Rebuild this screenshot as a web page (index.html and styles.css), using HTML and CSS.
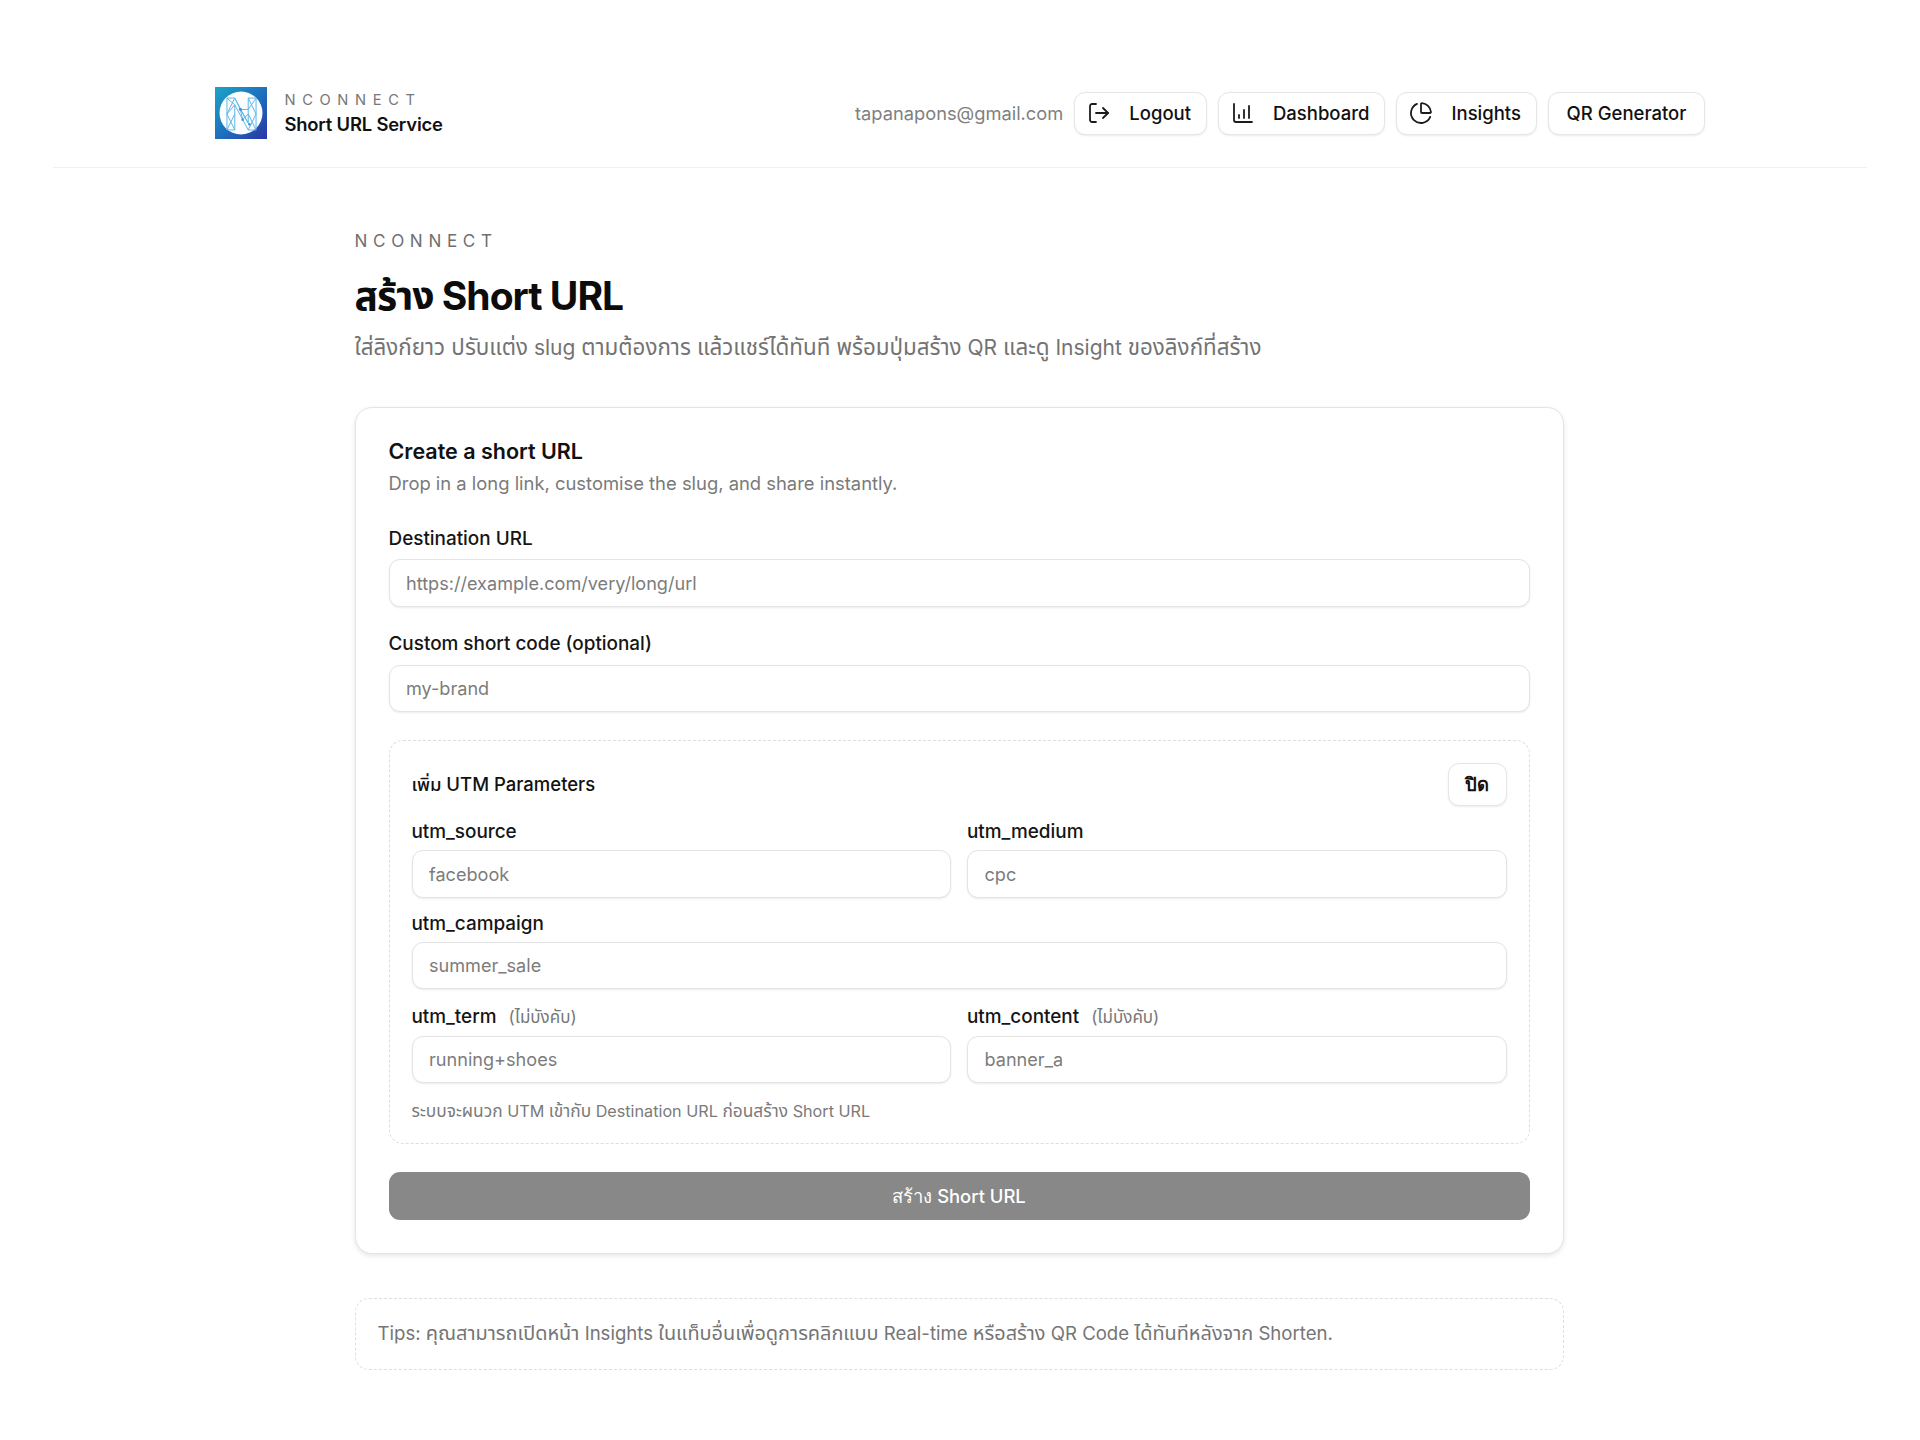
FILE: index.html
```html
<!DOCTYPE html>
<html lang="th">
<head>
<meta charset="utf-8">
<title>NCONNECT Short URL</title>
<link rel="stylesheet" href="styles.css">
</head>
<body>
<header class="topbar">
  <div class="brand">
    <svg class="logo" viewBox="0 0 52 52" aria-hidden="true">
      <defs><linearGradient id="lg" x1="0" y1="0" x2="1" y2="1"><stop offset="0" stop-color="#1ba5c6"/><stop offset=".55" stop-color="#1e6cbc"/><stop offset="1" stop-color="#2a34a6"/></linearGradient></defs>
      <rect width="52" height="52" fill="url(#lg)"/>
      <circle cx="26" cy="26" r="21.5" fill="#fbfdfe"/>
      <g transform="translate(26.500 27) scale(1.12 1.14) translate(-26 -27)">
        <g fill="none" stroke="#5bb5e6" stroke-width=".85">
          <path d="M13 13h7l12 22V13h7v28h-7L20 19v22h-7zM13 13l7 6M20 13l-7 14 7 14M13 27l7-8M13 41l7-14M20 13l5 10 7 12M32 13l7 14-7 14M39 13l-7 10-7 0M39 41l-7-14-5 5M25 23l2 9"/>
        </g>
        <g fill="#3d8fd0"><circle cx="25" cy="23" r="1.3"/><circle cx="27" cy="32" r="1.1"/><circle cx="33" cy="36" r="1.1"/></g>
      </g>
    </svg>
    <div class="brand-text">
      <div class="brand-kicker">NCONNECT</div>
      <div class="brand-name">Short URL Service</div>
    </div>
  </div>
  <nav class="nav">
    <span class="email">tapanapons@gmail.com</span>
    <a class="btn"><svg class="ico" viewBox="0 0 24 24"><path d="M9 21H5a2 2 0 0 1-2-2V5a2 2 0 0 1 2-2h4"/><path d="M16 17l5-5-5-5"/><path d="M21 12H9"/></svg><span>Logout</span></a>
    <a class="btn"><svg class="ico" viewBox="0 0 24 24"><path d="M3 3v16a2 2 0 0 0 2 2h16"/><path d="M8 17v-3"/><path d="M13 17V9"/><path d="M18 17V5"/></svg><span>Dashboard</span></a>
    <a class="btn"><svg class="ico" viewBox="0 0 24 24"><path d="M21 12c.552 0 1.005-.449.95-.998a10 10 0 0 0-8.953-8.951c-.55-.055-.998.398-.998.95v8a1 1 0 0 0 1 1z"/><path d="M21.210 15.890A10 10 0 1 1 8 2.830"/></svg><span>Insights</span></a>
    <a class="btn btn-text"><span>QR Generator</span></a>
  </nav>
</header>

<main class="page">
  <p class="kicker">NCONNECT</p>
  <h1 class="title">สร้าง Short URL</h1>
  <p class="subtitle"><span class="th">ใส่ลิงก์ยาว ปรับแต่ง</span> slug <span class="th">ตามต้องการ แล้วแชร์ได้ทันที พร้อมปุ่มสร้าง</span> QR <span class="th">และดู</span> Insight <span class="th">ของลิงก์ที่สร้าง</span></p>

  <section class="card">
    <h2 class="card-title">Create a short URL</h2>
    <p class="card-sub">Drop in a long link, customise the slug, and share instantly.</p>

    <label class="label label-first">Destination URL</label>
    <input class="input" placeholder="https://example.com/very/long/url">
    <label class="label label-second">Custom short code (optional)</label>
    <input class="input" placeholder="my-brand">

    <div class="utm">
      <div class="utm-head">
        <span class="utm-title">เพิ่ม UTM Parameters</span>
        <button class="close">ปิด</button>
      </div>
      <div class="utm-grid">
        <div class="field"><label class="label">utm_source</label><input class="input" placeholder="facebook"></div>
        <div class="field"><label class="label">utm_medium</label><input class="input" placeholder="cpc"></div>
        <div class="field wide"><label class="label">utm_campaign</label><input class="input" placeholder="summer_sale"></div>
        <div class="field"><label class="label label-opt">utm_term <small>(ไม่บังคับ)</small></label><input class="input" placeholder="running+shoes"></div>
        <div class="field"><label class="label label-opt">utm_content <small>(ไม่บังคับ)</small></label><input class="input" placeholder="banner_a"></div>
      </div>
      <p class="utm-note"><span class="th">ระบบจะผนวก</span> UTM <span class="th">เข้ากับ</span> Destination URL <span class="th">ก่อนสร้าง</span> Short URL</p>
    </div>

    <button class="submit">สร้าง Short URL</button>
  </section>

  <aside class="tips"><span>Tips: <span class="th">คุณสามารถเปิดหน้า</span> Insights <span class="th">ในแท็บอื่นเพื่อดูการคลิกแบบ</span> Real-time <span class="th">หรือสร้าง</span> QR Code <span class="th">ได้ทันทีหลังจาก</span> Shorten.</span></aside>
</main>
</body>
</html>
```

FILE: styles.css
```css
* { box-sizing: border-box; }
html, body { margin: 0; padding: 0; }
body {
  background: #fff;
  color: #111;
  font-family: Inter, "Noto Sans", "Noto Sans Thai", "DejaVu Sans", sans-serif;
  font-size: 18px;
  height: 1440px;
  overflow: hidden;
}
.th { font-size: 1.07em; }
.subtitle .th { font-size: 1.065em; }
.topbar {
  margin: 0 53px;
  padding: 87px 162px 28px;
  border-bottom: 1px solid #f0f0f0;
  display: flex;
  align-items: center;
  justify-content: space-between;
}
.brand { display: flex; align-items: center; gap: 17.500px; }
.logo { width: 52px; height: 52px; display: block; flex: none; }
.brand-kicker { font-size: 14.7px; letter-spacing: 0.45em; color: #777; line-height: 22px; }
.brand-name { font-size: 18.4px; font-weight: 600; line-height: 26px; color: #111; letter-spacing: -0.01em; }
.nav { display: flex; align-items: center; gap: 11px; }
.email { font-size: 18.3px; color: #808080; }
.btn {
  height: 43px;
  display: flex;
  align-items: center;
  gap: 18px;
  padding: 0 15px 0 12px;
  border: 1.2px solid #e6e6e6;
  border-radius: 11px;
  background: #fff;
  box-shadow: 0 1px 2px rgba(0,0,0,.08);
  font-size: 18.5px;
  font-weight: 500;
  color: #111;
}
.btn-text { padding: 0 17.600px; }
.ico { width: 24px; height: 24px; fill: none; stroke: #1c1c1c; stroke-width: 1.8; stroke-linecap: round; stroke-linejoin: round; flex: none; }
.page { width: 1209px; margin: 0 0 0 354.500px; padding-top: 62px; }
.kicker { margin: 0; font-size: 17.1px; letter-spacing: 0.33em; color: #6f6f6f; line-height: 22px; }
.title { margin: 18px 0 0; font-size: 39px; line-height: 52px; font-weight: 700; letter-spacing: -0.025em; color: #0c0c0c; }
.subtitle { margin: 10px 0 0; font-size: 21px; line-height: 30px; color: #737373; }
.card {
  margin-top: 44px;
  border: 1.2px solid #e4e4e4;
  border-radius: 17px;
  box-shadow: 0 2px 5px rgba(0,0,0,.1);
  padding: 28px 33px 33px;
  background: #fff;
}
.card-title { margin: 0; font-size: 21.5px; line-height: 30px; font-weight: 600; color: #111; }
.card-sub { margin: 3px 0 0; font-size: 18.4px; line-height: 28px; color: #7a7a7a; }
.label { display: block; font-size: 18.9px; line-height: 26px; font-weight: 500; color: #151515; }
.label small { font-size: 17px; font-weight: 400; color: #777; margin-left: 7px; }
.label-first { margin-top: 29px; margin-bottom: 7px; }
.label-second { margin-top: 24.200px; margin-bottom: 8px; }
.input {
  display: block;
  width: 100%;
  height: 47.500px;
  border: 1.2px solid #e4e4e4;
  border-radius: 11px;
  box-shadow: 0 1px 2px rgba(0,0,0,.08);
  padding: 0 16.500px;
  background: #fff;
  font: 400 18.1px Inter, "Noto Sans", sans-serif;
  outline: none;
}
.input::placeholder { color: #7c7c7c; opacity: 1; }
.utm {
  margin-top: 28px;
  border: 1.2px dashed #dedede;
  border-radius: 14px;
  padding: 22px 22px 21px;
}
.utm-head { display: flex; align-items: center; justify-content: space-between; }
.utm-title { font-size: 18.5px; font-weight: 500; }
.close {
  width: 59px;
  height: 43px;
  border: 1.2px solid #e6e6e6;
  border-radius: 11px;
  background: #fff;
  box-shadow: 0 1px 2px rgba(0,0,0,.08);
  font: 600 18.4px Inter, "Noto Sans", sans-serif;
  color: #111;
}
.utm-grid { margin-top: 13.300px; display: grid; grid-template-columns: 1fr 1fr; column-gap: 16px; row-gap: 13.500px; }
.field .label { margin-bottom: 4.600px; }
.field .label-opt { line-height: 28.400px; }
.wide { grid-column: 1 / -1; }
.utm-note { margin: 17px 0 0; font-size: 16.200px; line-height: 22px; color: #7a7a7a; }
.submit {
  display: block;
  width: 100%;
  height: 48px;
  margin-top: 28px;
  border: 0;
  border-radius: 11px;
  background: #888;
  color: #fff;
  font: 500 18.4px Inter, "Noto Sans", sans-serif;
}
.tips {
  margin-top: 44px;
  height: 72px;
  display: flex;
  align-items: center;
  padding: 0 22px;
  border: 1.2px dashed #dedede;
  border-radius: 14px;
  font-size: 18.600px;
  color: #757575;
}
```
